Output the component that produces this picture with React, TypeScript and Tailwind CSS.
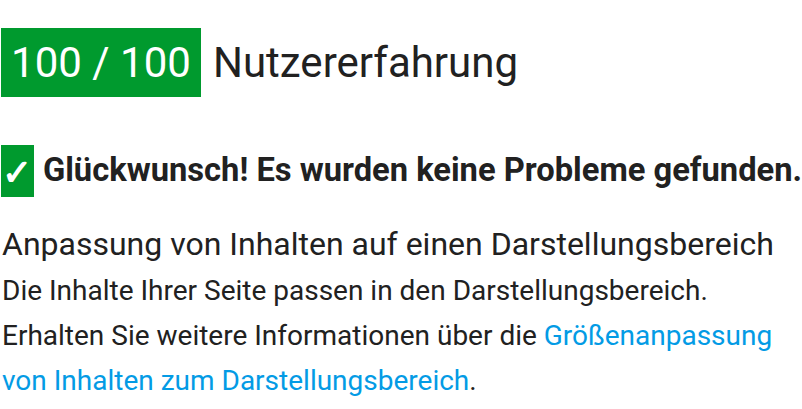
export default function App() {
  return (
    <div className="w-[802px] h-[409px] overflow-hidden bg-white text-[#212121]" style={{ fontFamily: 'Roboto, "Liberation Sans", sans-serif' }}>
      <div className="flex items-center pt-[28px] pl-[1px]">
        <div className="bg-[#009a2e] text-white h-[69px] w-[200px] flex items-center justify-center text-[42px] leading-none">100 / 100</div>
        <div className="ml-[12px] text-[42px] leading-none">Nutzererfahrung</div>
      </div>
      <div className="flex items-center mt-[48px] pl-[1px]">
        <div className="bg-[#009a2e] text-white w-[34px] h-[52px] flex items-center justify-center text-[36px] leading-none font-bold pt-[4px]">✓</div>
        <div className="ml-[9px] text-[32.7px] font-bold whitespace-nowrap">Glückwunsch! Es wurden keine Probleme gefunden.</div>
      </div>
      <div className="pl-[2px] mt-[26px] text-[32px] leading-[42px] whitespace-nowrap">Anpassung von Inhalten auf einen Darstellungsbereich</div>
      <div className="pl-[2px] mt-[3px] text-[28px] leading-[45px] w-[802px]">
        Die Inhalte Ihrer Seite passen in den Darstellungsbereich.<br />
        Erhalten Sie weitere Informationen über die <span className="text-[#039be5]">Größenanpassung von Inhalten zum Darstellungsbereich</span>.
      </div>
    </div>
  );
}
